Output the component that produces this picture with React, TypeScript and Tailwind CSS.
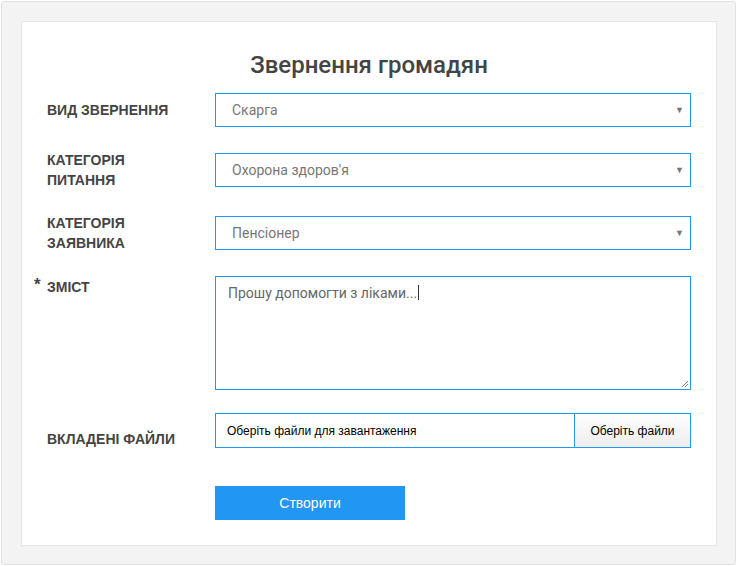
const labelCls =
  "font-['Liberation_Sans',Arial,sans-serif] font-bold text-[14px] leading-5 uppercase text-[#444]";

const SelectBox = ({ value }: { value: string }) => (
  <div className="relative flex h-[34px] items-center border border-[#2196f3] bg-white pl-4 pr-3">
    <span className="font-['Roboto',sans-serif] text-[14px] text-[#777]">{value}</span>
    <span className="absolute right-[6px] top-[11px] text-[9px] leading-none text-[#777]">▼</span>
  </div>
);

const App = () => {
  return (
    <div className="min-h-[566px] bg-white">
      <div className="ml-px mt-px w-[735px] h-[564px] rounded-[3px] border border-[#e2e2e2] bg-[#f3f3f3] p-[19px]">
        <div className="h-[525px] w-[696px] border border-[#e6e6e6] bg-white px-[25px]">
          <h1 className="mt-[28px] text-center font-['Roboto',sans-serif] text-[24px] font-medium leading-[30px] text-[#444]">
            Звернення громадян
          </h1>

          <div className="mt-[13px] grid grid-cols-[168px_1fr] grid-rows-[34px] items-center">
            <div className={labelCls}>Вид звернення</div>
            <SelectBox value="Скарга" />
          </div>

          <div className="mt-[26px] grid grid-cols-[168px_1fr] grid-rows-[34px] items-center">
            <div className={labelCls}>
              Категорія
              <br />
              питання
            </div>
            <SelectBox value="Охорона здоров'я" />
          </div>

          <div className="mt-[29px] grid grid-cols-[168px_1fr] grid-rows-[34px] items-center">
            <div className={labelCls}>
              Категорія
              <br />
              заявника
            </div>
            <SelectBox value="Пенсіонер" />
          </div>

          <div className="mt-[26px] grid grid-cols-[168px_1fr] items-start">
            <div className={`${labelCls} relative pt-[1px]`}>
              <span className="absolute -left-[13px] top-[-1px] text-[17px]">*</span>
              Зміст
            </div>
            <div className="relative h-[114px] border border-[#2196f3] bg-white px-3 pt-[3px]">
              <span className="font-['Roboto',sans-serif] text-[14px] text-[#666]">
                Прошу допомогти з ліками...
              </span>
              <span className="ml-px inline-block h-[15px] w-px translate-y-[2px] bg-[#333]" />
              <svg className="absolute bottom-[1px] right-[1px]" width="8" height="8" viewBox="0 0 8 8">
                <path d="M7 1L1 7M7 4L4 7" stroke="#888" strokeWidth="1" />
              </svg>
            </div>
          </div>

          <div className="mt-[23px] grid grid-cols-[168px_1fr] grid-rows-[35px] items-center">
            <div className={`${labelCls} pt-[16px]`}>Вкладені файли</div>
            <div className="flex h-[35px] border border-[#2196f3] bg-white">
              <div className="flex flex-1 items-center pl-[11px] font-['Liberation_Sans',Arial,sans-serif] text-[12px] text-black">
                Оберіть файли для завантаження
              </div>
              <div className="flex w-[116px] items-center justify-center border-l border-[#2196f3] bg-gradient-to-b from-white to-[#ededed] font-['Liberation_Sans',Arial,sans-serif] text-[12px] text-black">
                Оберіть файли
              </div>
            </div>
          </div>

          <div className="mt-[38px] grid grid-cols-[168px_1fr]">
            <div />
            <button className="h-[34px] w-[190px] bg-[#2196f3] font-['Liberation_Sans',Arial,sans-serif] text-[14px] text-white">
              Створити
            </button>
          </div>
        </div>
      </div>
    </div>
  );
};

export default App;
